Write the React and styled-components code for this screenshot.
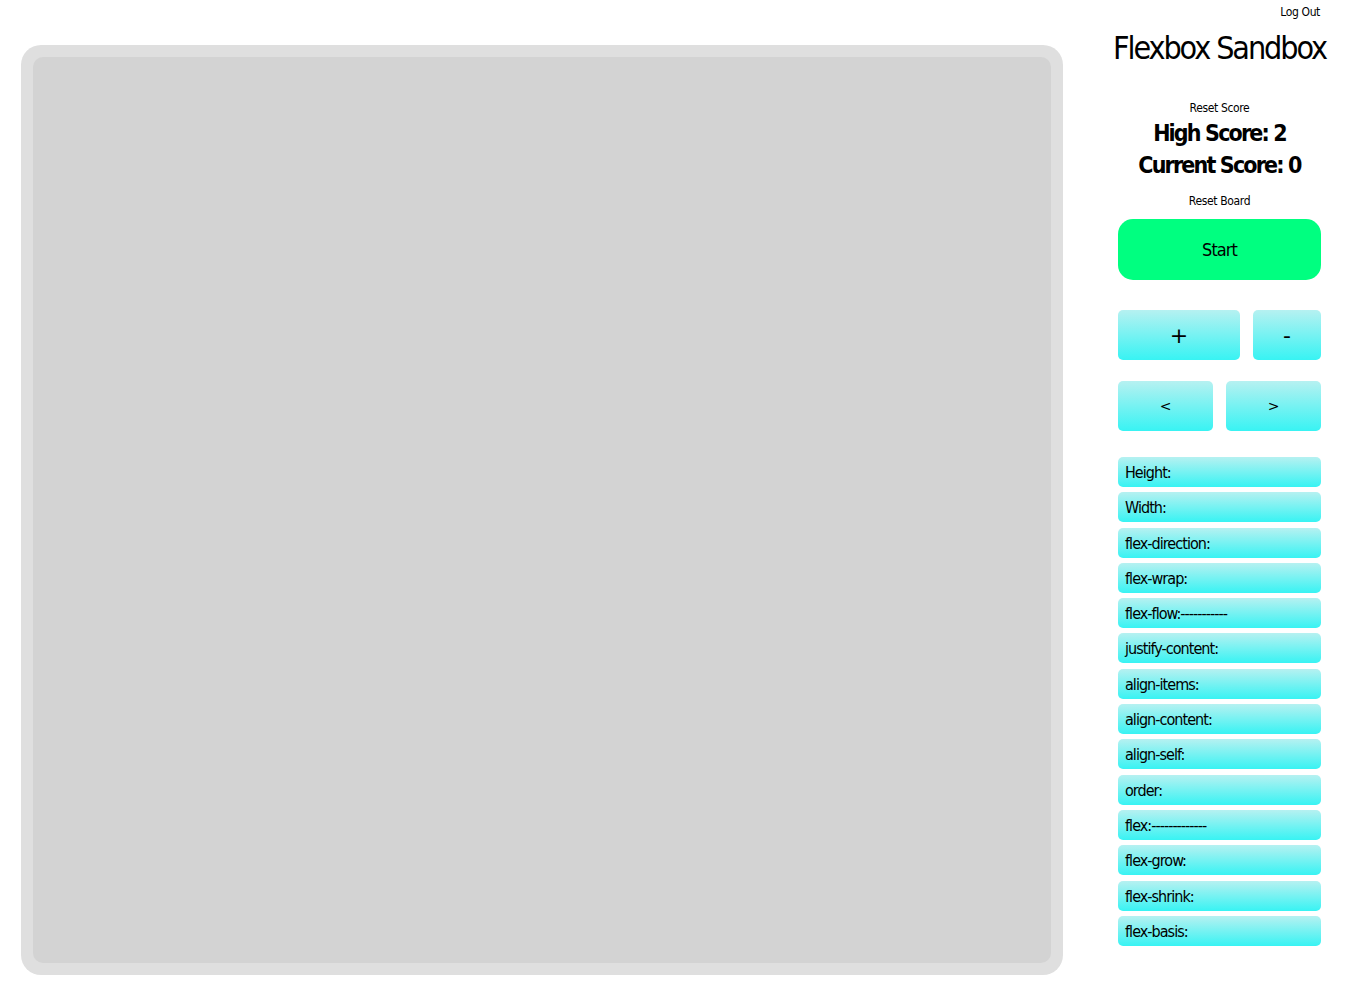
import React from "react";
import styled, { createGlobalStyle } from "styled-components";

const GlobalStyle = createGlobalStyle`
  body {
    margin: 0;
    background: #ffffff;
    font-family: "Liberation Sans Narrow", "DejaVu Sans Condensed", "Liberation Sans", Arial, sans-serif;
    font-stretch: condensed;
    letter-spacing: -0.06em;
    color: #000;
  }
`;

const Page = styled.div`
  display: flex;
  align-items: flex-start;
  width: 1351px;
  height: 1004px;
`;

const Board = styled.div`
  margin: 45px 0 0 21px;
  width: 1042px;
  height: 930px;
  box-sizing: border-box;
  background: #dfdfdf;
  border-radius: 20px;
  padding: 12px;
`;

const BoardInner = styled.div`
  width: 100%;
  height: 100%;
  background: #d3d3d3;
  border-radius: 10px;
`;

const Sidebar = styled.div`
  margin-left: 55px;
  width: 203px;
  display: flex;
  flex-direction: column;
  align-items: stretch;
`;

const LogOut = styled.div`
  align-self: flex-end;
  font-size: 12px;
  margin-top: 5px;
  margin-right: 1px;
  line-height: 14px;
  letter-spacing: -0.03em;
`;

const Title = styled.h1`
  margin: 11px -20px 0 -20px;
  font-size: 32px;
  font-weight: normal;
  letter-spacing: -0.065em;
  text-align: center;
  line-height: 36px;
  white-space: nowrap;
`;

const SmallLink = styled.div`
  text-align: center;
  font-size: 12px;
  line-height: 14px;
  letter-spacing: -0.03em;
  margin-top: ${(p) => p.top}px;
`;

const Score = styled.div`
  text-align: center;
  font-size: 23px;
  font-weight: bold;
  letter-spacing: -0.08em;
  line-height: 32px;
  white-space: nowrap;
  margin-top: ${(p) => p.top || 0}px;
`;

const StartButton = styled.button`
  margin-top: 11px;
  height: 61px;
  border: none;
  border-radius: 15px;
  background: #00ff80;
  font-family: inherit;
  font-stretch: inherit;
  letter-spacing: inherit;
  font-size: 18px;
  color: #000;
`;

const ButtonRow = styled.div`
  display: flex;
  gap: 13px;
  margin-top: ${(p) => p.top}px;
`;

const GradButton = styled.button`
  flex: ${(p) => p.grow || 1} 1 0;
  height: 50px;
  border: none;
  border-radius: 5px;
  background: linear-gradient(#b6f1f1, #38f3f3);
  font-family: "DejaVu Sans", sans-serif;
  font-size: ${(p) => p.size || 22}px;
  color: #000;
  padding: 0;
`;

const PropList = styled.div`
  display: flex;
  flex-direction: column;
  gap: 5.3px;
  margin-top: 26px;
`;

const PropRow = styled.div`
  height: 30px;
  box-sizing: border-box;
  border-radius: 5px;
  background: linear-gradient(#b6f1f1, #38f3f3);
  font-size: 16px;
  line-height: 30px;
  padding: 1px 0 0 7px;
  white-space: nowrap;
`;

const props = [
  "Height:",
  "Width:",
  "flex-direction:",
  "flex-wrap:",
  "flex-flow:-----------",
  "justify-content:",
  "align-items:",
  "align-content:",
  "align-self:",
  "order:",
  "flex:-------------",
  "flex-grow:",
  "flex-shrink:",
  "flex-basis:",
];

const App = () => {
  return (
    <>
      <GlobalStyle />
      <Page>
        <Board>
          <BoardInner />
        </Board>
        <Sidebar>
          <LogOut>Log Out</LogOut>
          <Title>Flexbox Sandbox</Title>
          <SmallLink top={35}>Reset Score</SmallLink>
          <Score top={2}>High Score: 2</Score>
          <Score>Current Score: 0</Score>
          <SmallLink top={13}>Reset Board</SmallLink>
          <StartButton>Start</StartButton>
          <ButtonRow top={30}>
            <GradButton grow={122}>+</GradButton>
            <GradButton grow={68}>-</GradButton>
          </ButtonRow>
          <ButtonRow top={21}>
            <GradButton size={14}>&lt;</GradButton>
            <GradButton size={14}>&gt;</GradButton>
          </ButtonRow>
          <PropList>
            {props.map((p) => (
              <PropRow key={p}>{p}</PropRow>
            ))}
          </PropList>
        </Sidebar>
      </Page>
    </>
  );
};

export default App;
